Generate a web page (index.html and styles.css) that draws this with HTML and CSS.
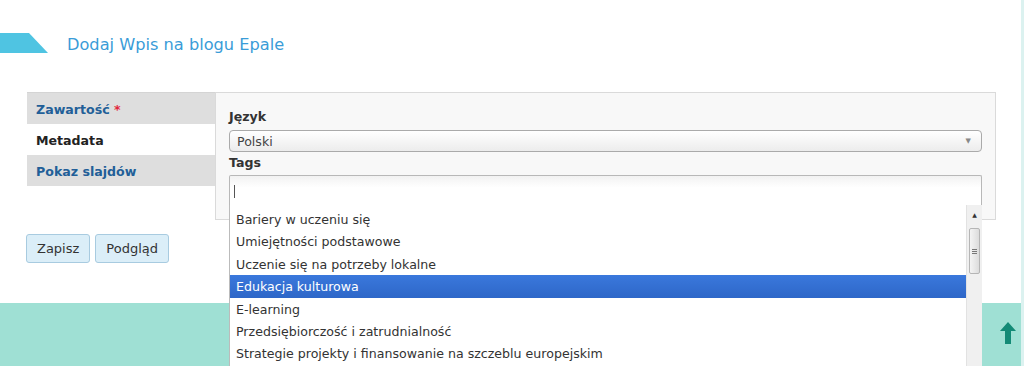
FILE: index.html
```html
<!DOCTYPE html>
<html lang="pl">
<head>
  <meta charset="UTF-8">
  <title>Dodaj Wpis na blogu Epale</title>
  <link rel="stylesheet" href="styles.css">
</head>
<body>
  <div class="page">
    <div class="page-head">
      <span class="head-tab"></span>
      <h1>Dodaj Wpis na blogu Epale</h1>
    </div>

    <form class="node-form">
      <div class="vtabs">
        <ul class="vtabs-list">
          <li class="vtab"><a href="#">Zawartość <span class="req">*</span></a></li>
          <li class="vtab active"><a href="#">Metadata</a></li>
          <li class="vtab"><a href="#">Pokaz slajdów</a></li>
        </ul>

        <div class="vtabs-pane">
          <label class="field-label">Język</label>
          <div class="select-box">
            <span>Polski</span>
            <span class="select-arrow">&#9660;</span>
          </div>

          <label class="field-label">Tags</label>
          <div class="tags-field">
            <div class="tags-input"><span class="caret"></span></div>

            <!-- lista podpowiedzi -->
            <div class="suggest">
              <ul class="suggest-list">
                <li>Bariery w uczeniu się</li>
                <li>Umiejętności podstawowe</li>
                <li>Uczenie się na potrzeby lokalne</li>
                <li class="hover">Edukacja kulturowa</li>
                <li>E-learning</li>
                <li>Przedsiębiorczość i zatrudnialność</li>
                <li>Strategie projekty i finansowanie na szczeblu europejskim</li>
              </ul>
              <div class="suggest-scroll">
                <span class="scroll-up">&#9650;</span>
                <span class="scroll-thumb"><i></i><i></i><i></i></span>
              </div>
            </div>
          </div>
        </div>
      </div>

      <div class="form-actions">
        <button type="button" class="btn">Zapisz</button>
        <button type="button" class="btn">Podgląd</button>
      </div>
    </form>
  </div>

  <div class="page-foot">
    <a href="#" class="to-top">
      <svg width="16" height="22" viewBox="0 0 16 22">
        <path d="M8 0 L16 9 L11 9 L11 22 L5 22 L5 9 L0 9 Z" fill="#138a76"/>
      </svg>
    </a>
  </div>
</body>
</html>
```

FILE: styles.css
```css
html {
  background-color: #dcf2f0;
}

body {
  margin: 0 3px 0 0;
  height: 366px;
  background-color: #fff;
  font-family: "DejaVu Sans", Verdana, sans-serif;
  font-size: 12.6px;
  color: #333;
  overflow: hidden;
}

.page {
  height: 303px;
}

/* Naglowek */
.page-head {
  display: flex;
  align-items: center;
  height: 20px;
  padding-top: 33px;
}

.head-tab {
  width: 48px;
  height: 20px;
  background-color: #4fc4e2;
  clip-path: polygon(0 0, 29px 0, 48px 20px, 0 20px);
}

.page-head h1 {
  margin: 2px 0 0 19px;
  font-size: 16.2px;
  font-weight: normal;
  color: #3a9cd8;
}

/* Zakladki pionowe */
.node-form {
  padding: 39px 0 0 27px;
}

.vtabs {
  display: flex;
  width: 969px;
}

.vtabs-list {
  width: 188px;
  margin: 0;
  padding: 0;
  list-style: none;
  border-top: 1px solid #d4d4d4;
  align-self: flex-start;
}

.vtab {
  height: 31px;
  background-color: #dedede;
}

.vtab a {
  display: block;
  padding-left: 9px;
  line-height: 34px;
  font-weight: bold;
  color: #225f98;
  text-decoration: none;
}

.vtab.active {
  background-color: #fff;
}

.vtab.active a {
  color: #222;
}

.req {
  color: #e2263c;
}

.vtabs-pane {
  flex: 1;
  padding: 15px 13px 14px 13px;
  background-color: #f8f8f8;
  border: 1px solid #dadada;
}

.field-label {
  display: block;
  font-weight: bold;
  color: #333;
  line-height: 17px;
}

.select-box {
  display: flex;
  justify-content: space-between;
  align-items: center;
  height: 20px;
  margin-top: 5px;
  margin-bottom: 2px;
  padding: 0 10px 0 7px;
  border: 1px solid #aaa;
  border-radius: 4px;
  background: linear-gradient(#ffffff, #ececec);
  color: #444;
}

.select-arrow {
  font-size: 7px;
  color: #888;
}

.tags-field {
  position: relative;
  margin-top: 4px;
}

.tags-input {
  height: 29px;
  border: 1px solid #b8b8b8;
  border-bottom: none;
  background: linear-gradient(#f2f2f2, #fff 40%);
  border-radius: 2px 2px 0 0;
}

.caret {
  display: block;
  width: 1px;
  height: 13px;
  margin: 9px 0 0 4px;
  background-color: #555;
}

.suggest {
  position: absolute;
  top: 30px;
  left: 0;
  width: 752px;
  height: 170px;
  display: flex;
  background-color: #fff;
  border-left: 1px solid #bbb;
  z-index: 10;
}

.suggest-list {
  flex: 1;
  margin: 0;
  padding: 3px 0 0 0;
  list-style: none;
}

.suggest-list li {
  height: 22.4px;
  line-height: 24.4px;
  padding-left: 6px;
  color: #333;
  white-space: nowrap;
}

.suggest-list li.hover {
  background: linear-gradient(#3a78dc, #2e67c8);
  color: #fff;
}

.suggest-scroll {
  position: relative;
  width: 15px;
  background-color: #f0f0f0;
  border-left: 1px solid #e2e2e2;
}

.scroll-up {
  display: block;
  text-align: center;
  font-size: 6px;
  color: #333;
  padding-top: 6px;
}

.scroll-thumb {
  position: absolute;
  top: 23px;
  left: 2px;
  width: 11px;
  height: 46px;
  border: 1px solid #b5b5b5;
  border-radius: 2px;
  background: linear-gradient(90deg, #f4f4f4, #dcdcdc);
  box-sizing: border-box;
  display: flex;
  flex-direction: column;
  justify-content: center;
  align-items: center;
  gap: 1px;
}

.scroll-thumb i {
  display: block;
  width: 5px;
  height: 1px;
  background-color: #777;
}

/* Przyciski */
.form-actions {
  display: flex;
  gap: 5px;
  margin-top: 14px;
  margin-left: -1px;
}

.btn {
  height: 29px;
  padding: 0 10px;
  font-family: "DejaVu Sans", Verdana, sans-serif;
  font-size: 13px;
  color: #333;
  background-color: #dbeef8;
  border: 1px solid #a8cbe0;
  border-radius: 3px;
  cursor: pointer;
}

/* Stopka */
.page-foot {
  height: 44px;
  display: flex;
  justify-content: flex-end;
  padding: 19px 5px 0 0;
  background-color: #9fe0d4;
}

.to-top {
  display: block;
  width: 16px;
  height: 22px;
}
```
